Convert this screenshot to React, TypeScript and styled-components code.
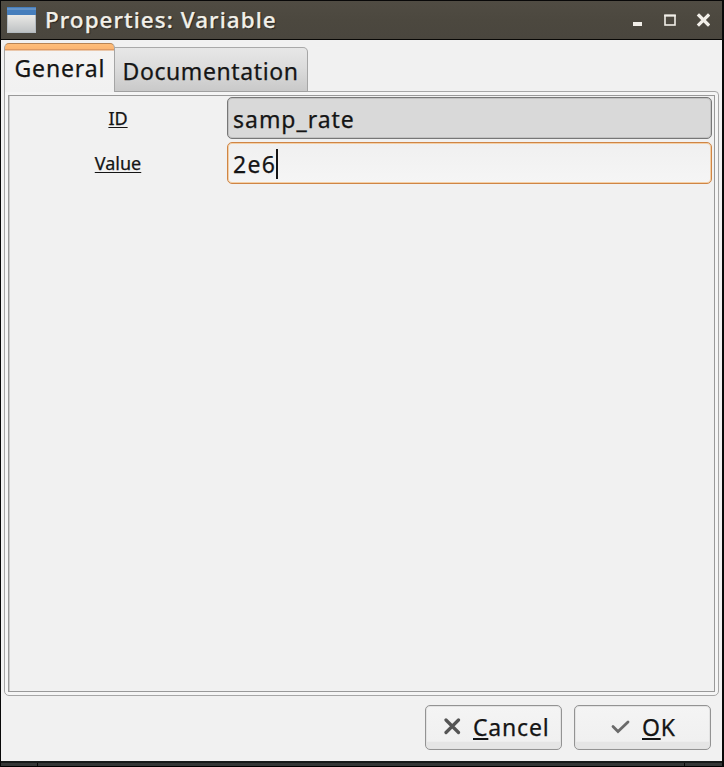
import React from "react";
import styled, { createGlobalStyle } from "styled-components";

const GlobalStyle = createGlobalStyle`
  * { box-sizing: border-box; }
  body { margin: 0; background: #000; overflow: hidden; }
`;

const Window = styled.div`
  width: 724px;
  height: 767px;
  padding: 1px 2px 0 1px;
  background: #080808;
  display: flex;
  flex-direction: column;
  font-family: "Noto Sans", sans-serif;
  color: #151515;
  -webkit-text-stroke: 0.25px currentColor;
`;

const TitleBar = styled.header`
  height: 39px;
  flex: none;
  display: flex;
  align-items: center;
  padding: 0 12px 0 6px;
  color: #f2f0e9;
  border-bottom: 1px solid #080705;
  background: linear-gradient(#504c43, #4c483f 50%, #4a463e);
`;

const Title = styled.h1`
  margin: 0 auto 0 9px;
  font-size: 22.5px;
  line-height: 38px;
  height: 38px;
  font-weight: 500;
  letter-spacing: 1.03px;
  white-space: nowrap;
  text-shadow: 1px 1px 1px #211f1b;
`;

const Controls = styled.svg`
  display: block;
  flex: none;
`;

const Body = styled.main`
  flex: 1;
  min-height: 0;
  display: flex;
  flex-direction: column;
  padding: 3px 3px 0;
  background: #f1f1f1;
`;

const Tabs = styled.nav`
  display: flex;
  align-items: flex-end;
  height: 49px;
  margin-bottom: -1px;
  flex: none;
`;

const Tab = styled.div<{ $active?: boolean; $width: number; $tracking: number }>`
  position: relative;
  z-index: ${(p) => (p.$active ? 1 : 0)};
  width: ${(p) => p.$width}px;
  height: ${(p) => (p.$active ? 49 : 45)}px;
  padding-left: ${(p) => (p.$active ? 9.5 : 7.5)}px;
  border: 1px solid #a5a5a5;
  border-top-color: ${(p) => (p.$active ? "#b78455" : "#a9a9a9")};
  border-left-width: ${(p) => (p.$active ? 1 : 0)}px;
  border-bottom: ${(p) => (p.$active ? "0" : "1px solid #a0a0a0")};
  border-radius: ${(p) => (p.$active ? "5px 5px 0 0" : "0 5px 0 0")};
  background: ${(p) => (p.$active
    ? "linear-gradient(#ffbd79 0, #fbb571 5px, #df9a62 5px, #df9a62 6px, #f4f3f2 7px, #f1f1f1)"
    : "linear-gradient(#e7e7e7, #dcdcdc 45%, #c9c9c9)")};
  font-size: 23px;
  line-height: ${(p) => (p.$active ? 49 : 47)}px;
  letter-spacing: ${(p) => p.$tracking}px;
  white-space: nowrap;
`;

const Notebook = styled.section`
  height: 605px;
  flex: none;
  padding: 3px;
  border: 1px solid #a6a6a6;
  border-radius: 0 4px 5px 5px;
  background: #f5f5f5;
`;

const Page = styled.div`
  height: 100%;
  border: 1px solid #999;
  box-shadow: inset 1px 0 0 #c9c9c9;
  background: #f1f1f1;
  padding: 1px 2px 0 0;
  display: flex;
  flex-direction: column;
  gap: 3px;
`;

const Row = styled.div`
  display: grid;
  grid-template-columns: 218px 1fr;
  height: 42px;
`;

const Label = styled.label`
  justify-self: center;
  display: flex;
  align-items: center;
  padding-bottom: 1px;
  font-size: 18px;
  text-decoration: underline;
  text-underline-offset: 2px;
  text-decoration-thickness: 1px;
`;

const Entry = styled.div<{ $focused?: boolean }>`
  display: flex;
  align-items: center;
  padding-left: 5px;
  padding-top: 1px;
  font-size: 23px;
  line-height: 36px;
  letter-spacing: ${(p) => (p.$focused ? 1.3 : 0.98)}px;
  border: 1px solid ${(p) => (p.$focused ? "#cf8545" : "#777")};
  border-radius: 5px;
  background: ${(p) => (p.$focused ? "linear-gradient(#f0f0f0, #f5f5f5)" : "#d9d9d9")};
  box-shadow: inset 0 0 0 1px ${(p) => (p.$focused ? "#f3cfa6" : "#c2c2c2")};
`;

const Caret = styled.span`
  width: 1.5px;
  height: 30px;
  background: #151515;
`;

const Actions = styled.footer`
  display: flex;
  justify-content: flex-end;
  gap: 12px;
  padding: 9px 8px 0 0;
`;

const Button = styled.button<{ $pad: number; $gap: number; $tracking: number }>`
  width: 137px;
  height: 45px;
  display: flex;
  align-items: center;
  gap: ${(p) => p.$gap}px;
  padding: 0 0 1px ${(p) => p.$pad}px;
  border: 1px solid #939393;
  border-radius: 5px;
  background: linear-gradient(#f4f4f4 0, #f0f0f0 82%, #e5e5e5 84%, #e5e5e5 100%);
  box-shadow: inset 0 0 0 1px #e3e3e3;
  color: #151515;
  font-family: inherit;
  font-size: 23px;
  line-height: 36px;
  letter-spacing: ${(p) => p.$tracking}px;
  -webkit-text-stroke: 0.25px currentColor;
`;

const Mnemonic = styled.span`
  text-decoration: underline;
  text-decoration-thickness: 2px;
  text-underline-offset: 2px;
  text-decoration-skip-ink: none;
`;

const BottomEdge = styled.div`
  height: 6px;
  flex: none;
  border-top: 2px solid #171a1a;
  border-bottom: 1px solid #000;
  background: #353737;
  display: flex;
  justify-content: space-between;
  padding: 0 37px 0 36px;
`;

const EdgeMark = styled.span`
  width: 1px;
  height: 3px;
  background: #080808;
`;

function WindowIcon() {
  return (
    <Controls width="29" height="26" viewBox="0 0 29 26">
      <defs>
        <linearGradient id="pane" x1="0" y1="0" x2="0" y2="1">
          <stop offset="0" stopColor="#e9e9e6" />
          <stop offset="1" stopColor="#bfc2c4" />
        </linearGradient>
      </defs>
      <rect width="29" height="26" fill="#b2b9bf" />
      <rect width="29" height="8" fill="#467ebc" />
      <rect y="1" width="29" height="2" fill="#6392c6" />
      <rect x="1" y="8" width="27" height="17" fill="url(#pane)" />
    </Controls>
  );
}

function WindowControls() {
  return (
    <Controls width="78" height="20" viewBox="0 0 78 20">
      <rect x="1" y="12" width="9" height="4" fill="#f1eee8" />
      <rect x="33" y="5.5" width="10" height="9.5" fill="none" stroke="#f1eee8" strokeWidth="1.6" />
      <path d="M32.2 4.5h11.6v2H32.2z" fill="#f1eee8" />
      <path d="M67 5.5l9 9M76 5.5l-9 9" stroke="#f1eee8" strokeWidth="3.2" strokeLinecap="square" />
    </Controls>
  );
}

export default function App() {
  return (
    <>
      <GlobalStyle />
      <Window>
        <TitleBar>
          <WindowIcon />
          <Title>Properties: Variable</Title>
          <WindowControls />
        </TitleBar>
        <Body>
          <Tabs>
            <Tab $active $width={111} $tracking={0.85}>General</Tab>
            <Tab $width={193} $tracking={0.6}>Documentation</Tab>
          </Tabs>
          <Notebook>
            <Page>
              <Row><Label>ID</Label><Entry>samp_rate</Entry></Row>
              <Row><Label>Value</Label><Entry $focused>2e6<Caret /></Entry></Row>
            </Page>
          </Notebook>
          <Actions>
            <Button $pad={17} $gap={12} $tracking={0.8}>
              <Controls width="18" height="18" viewBox="0 0 18 18">
                <path d="M3 2l12.5 12.5M15.5 2l-12.5 12.5" stroke="#555" strokeWidth="3.2" strokeLinecap="round" />
              </Controls>
              <span><Mnemonic>C</Mnemonic>ancel</span>
            </Button>
            <Button $pad={36} $gap={12} $tracking={0.7}>
              <Controls width="19" height="18" viewBox="0 0 19 18">
                <path d="M2 8.5l5 5L17 4" fill="none" stroke="#6a6a6a" strokeWidth="2.8" strokeLinecap="round" />
              </Controls>
              <span><Mnemonic>O</Mnemonic>K</span>
            </Button>
          </Actions>
        </Body>
        <BottomEdge><EdgeMark /><EdgeMark /></BottomEdge>
      </Window>
    </>
  );
}
